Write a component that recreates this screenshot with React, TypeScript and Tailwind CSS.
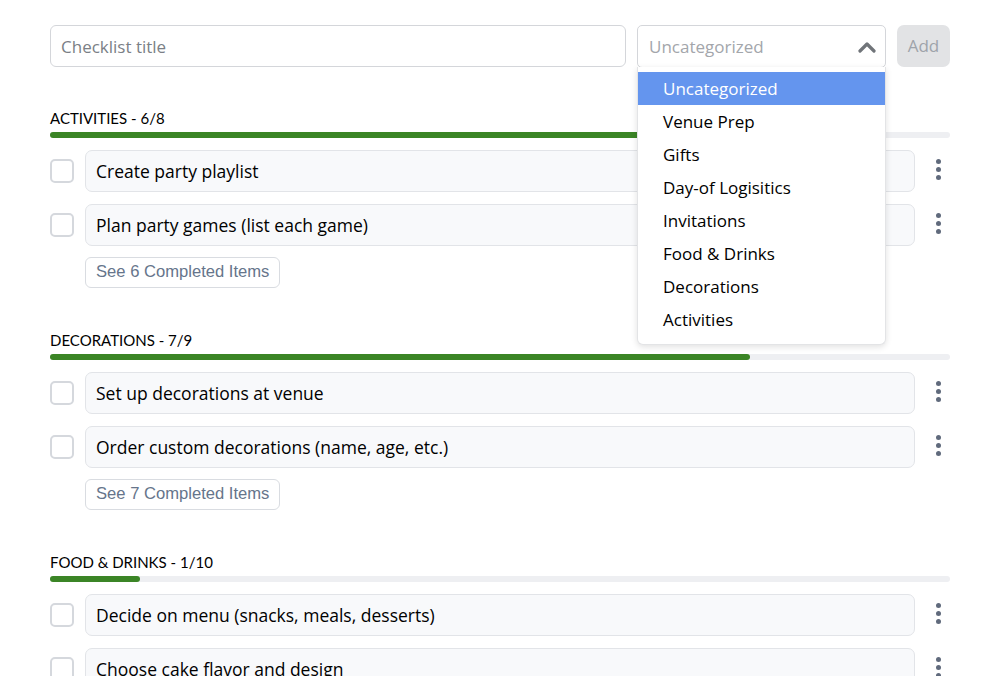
import { useState } from 'react';

type Section = {
    name: string;
    done: number;
    total: number;
    completed: number;
    items: string[];
};

const sections: Section[] = [
    { name: 'Activities', done: 6, total: 8, completed: 6, items: ['Create party playlist', 'Plan party games (list each game)'] },
    { name: 'Decorations', done: 7, total: 9, completed: 7, items: ['Set up decorations at venue', 'Order custom decorations (name, age, etc.)'] },
    { name: 'Food & Drinks', done: 1, total: 10, completed: 1, items: ['Decide on menu (snacks, meals, desserts)', 'Choose cake flavor and design'] },
];

const categories = [
    'Uncategorized',
    'Venue Prep',
    'Gifts',
    'Day-of Logisitics',
    'Invitations',
    'Food & Drinks',
    'Decorations',
    'Activities',
];

function Kebab() {
    return (
        <button className="w-6 flex flex-col items-center gap-[3px]">
            <span className="w-[5px] h-[5px] rounded-full bg-[#606a7c]" />
            <span className="w-[5px] h-[5px] rounded-full bg-[#606a7c]" />
            <span className="w-[5px] h-[5px] rounded-full bg-[#606a7c]" />
        </button>
    );
}

function ChecklistSection({ section }: { section: Section }) {
    const pct = (section.done / section.total) * 100;
    return (
        <div className="flex flex-col">
            <h2 className="text-[15px] leading-5 text-black uppercase font-['Lato',sans-serif]">
                {section.name} - {section.done}/{section.total}
            </h2>
            <div className="mt-[4px] h-[6px] rounded-full bg-[#eeeff2]">
                <div className="h-full rounded-full bg-[#3b8526]" style={{ width: `${pct}%` }} />
            </div>
            <div className="mt-[12px] flex flex-col gap-3">
                {section.items.map((item) => (
                    <div key={item} className="flex items-start">
                        <div className="mt-[9px] w-6 h-6 rounded-[5px] border-2 border-[#d5d8dd] bg-white shrink-0" />
                        <div className="ml-[11px] w-[831px] h-[42px] rounded-[7px] border border-[#e2e4e8] bg-[#f8f9fb] px-[10px] flex items-center text-[17.5px] text-black">
                            {item}
                        </div>
                        <div className="ml-[11px] mt-[9px]">
                            <Kebab />
                        </div>
                    </div>
                ))}
            </div>
            <button className="ml-[35px] mt-[11px] self-start h-[31px] px-[10px] rounded-[6px] border border-[#d9dce1] bg-white text-[16.6px] text-[#66758b] font-['Liberation_Sans',Arial,sans-serif]">
                See {section.completed} Completed Items
            </button>
        </div>
    );
}

export default function App() {
    const [open] = useState(true);
    return (
        <div className="w-[1000px] h-[676px] overflow-hidden bg-white font-['Open_Sans',sans-serif]">
            <div className="px-[50px] pt-[25px] flex flex-col">
                <div className="flex items-start gap-[11px]">
                    <input
                        placeholder="Checklist title"
                        className="w-[576px] shrink-0 h-[42px] rounded-[6px] border border-[#d4d6da] px-[10px] text-[17px] placeholder:text-[#7b7f86] outline-none"
                    />
                    <div className="relative shrink-0">
                        <div className="w-[249px] h-[43px] rounded-[5px] border border-[#d4d6da] px-[11px] flex items-center justify-between text-[17px] text-[#a3a6ab]">
                            <span>Uncategorized</span>
                            <svg width="18" height="12" viewBox="0 0 18 12" className="mr-[-2px]">
                                <path d="M2 10 L9 3 L16 10" fill="none" stroke="#707479" strokeWidth="3.2" strokeLinecap="round" strokeLinejoin="round" />
                            </svg>
                        </div>
                        {open && (
                            <ul className="absolute left-0 top-[42px] w-[249px] z-10 bg-white rounded-b-[6px] border border-[#e3e4e6] border-t-0 shadow-[0_2px_6px_rgba(0,0,0,0.12)] pt-[5px] pb-[8px]">
                                {categories.map((c, i) => (
                                    <li
                                        key={c}
                                        className={`h-[33px] px-[25px] flex items-center text-[17px] ${i === 0 ? 'bg-[#6495ee] text-white' : 'text-black'}`}
                                    >
                                        {c}
                                    </li>
                                ))}
                            </ul>
                        )}
                    </div>
                    <button className="w-[53px] shrink-0 h-[42px] rounded-[7px] bg-[#e2e3e5] text-[17px] text-[#9ea3aa]">Add</button>
                </div>

                <div className="mt-[40px] flex flex-col gap-[42px]">
                    {sections.map((s) => (
                        <ChecklistSection key={s.name} section={s} />
                    ))}
                </div>
            </div>
        </div>
    );
}
